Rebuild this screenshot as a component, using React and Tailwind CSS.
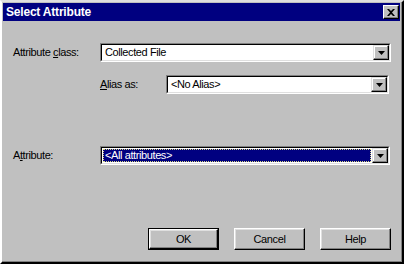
import React from 'react';

const FONT = { fontFamily: '"Liberation Sans", Arial, sans-serif' };

function Arrow() {
  return (
    <svg width="7" height="4" viewBox="0 0 7 4" className="block">
      <path d="M0 0h7L3.5 4z" fill="#000" />
    </svg>
  );
}

function Combo({ value, selected, className }) {
  return (
    <div className={`flex h-[19px] border border-t-[#808080] border-l-[#808080] border-b-white border-r-white ${className}`}>
      <div className="flex flex-1 border border-t-black border-l-black border-b-[#dfdfdf] border-r-[#dfdfdf] bg-white">
        <div className="flex flex-1 items-center px-[1px]">
          {selected ? (
            <div className="flex h-[13px] flex-1 items-center border border-dotted border-[#d8d880] bg-[#000080] pl-[1px] text-white">
              {value}
            </div>
          ) : (
            <span className="pl-[2px] text-black">{value}</span>
          )}
        </div>
        <div className="flex w-[16px] items-center justify-center border border-t-[#dfdfdf] border-l-[#dfdfdf] border-b-black border-r-black bg-[#c0c0c0] shadow-[inset_-1px_-1px_0_#808080,inset_1px_1px_0_#fff]">
          <Arrow />
        </div>
      </div>
    </div>
  );
}

function Button({ label, isDefault }) {
  return (
    <div className={`h-[22px] w-[71px] ${isDefault ? 'border border-black' : ''}`}>
      <div className="flex h-full w-full items-center justify-center border border-t-white border-l-white border-b-black border-r-black bg-[#c0c0c0] shadow-[inset_-1px_-1px_0_#808080,inset_1px_1px_0_#dfdfdf] text-black">
        {label}
      </div>
    </div>
  );
}

export default function App() {
  return (
    <div
      className="h-[264px] w-[404px] overflow-hidden bg-[#c0c0c0] text-[11px] tracking-[-0.4px] border-2 border-t-[#dfdfdf] border-l-white border-b-black border-r-black"
      style={FONT}
    >
      <div className="flex h-full flex-col border-r border-b border-r-[#808080] border-b-[#808080] p-[1px]">
        {/* Title bar */}
        <div className="flex h-[18px] items-center justify-between bg-[#000080] pl-[3px] pr-[1px]">
          <span className="text-[12px] font-bold text-white tracking-[-0.2px]">Select Attribute</span>
          <div className="flex h-[14px] w-[16px] items-center justify-center border border-t-white border-l-white border-b-black border-r-black bg-[#c0c0c0] shadow-[inset_-1px_-1px_0_#808080]">
            <svg width="8" height="7" viewBox="0 0 8 7" className="block">
              <path d="M0 0h2l2 2 2-2h2L5 3.5 8 7H6L4 5 2 7H0l3-3.5z" fill="#000" />
            </svg>
          </div>
        </div>

        {/* Body */}
        <div className="flex flex-1 flex-col pl-[10px] pr-[9px] pt-[22px]">
          <div className="flex items-center">
            <span className="w-[87px]">Attribute <span className="underline">c</span>lass:</span>
            <Combo value="Collected File" className="w-[291px]" />
          </div>
          <div className="mt-[13px] flex items-center">
            <span className="ml-[87px] w-[66px]"><span className="underline">A</span>lias as:</span>
            <Combo value="<No Alias>" className="w-[223px]" />
          </div>
          <div className="mt-[52px] flex items-center">
            <span className="w-[87px]">A<span className="underline">t</span>tribute:</span>
            <Combo value="<All attributes>" selected className="w-[290px]" />
          </div>
          <div className="mt-auto mb-[10px] flex justify-end gap-[15px]">
            <Button label="OK" isDefault />
            <Button label="Cancel" />
            <Button label="Help" />
          </div>
        </div>
      </div>
    </div>
  );
}
